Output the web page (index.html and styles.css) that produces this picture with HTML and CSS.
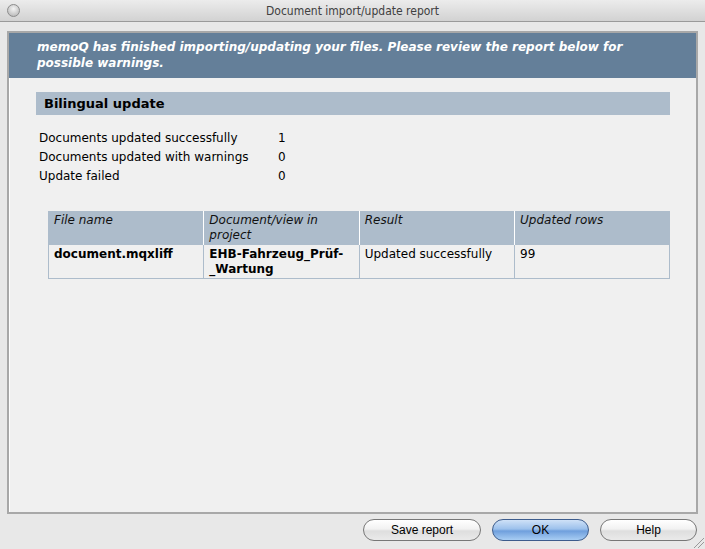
FILE: index.html
```html
<!DOCTYPE html>
<html>
<head>
<meta charset="utf-8">
<link rel="stylesheet" href="styles.css">
</head>
<body>
<div class="window">
  <div class="titlebar">
    <span class="close"></span>
    <span class="title">Document import/update report</span>
  </div>
  <div class="panel">
    <div class="banner">memoQ has finished importing/updating your files. Please review the report below for possible warnings.</div>
    <div class="section">
      <div class="section-head">Bilingual update</div>
      <div class="stats">
        <div class="stat"><span class="label">Documents updated successfully</span><span class="val">1</span></div>
        <div class="stat"><span class="label">Documents updated with warnings</span><span class="val">0</span></div>
        <div class="stat"><span class="label">Update failed</span><span class="val">0</span></div>
      </div>
      <table class="report">
        <thead>
          <tr><th>File name</th><th>Document/view in project</th><th>Result</th><th>Updated rows</th></tr>
        </thead>
        <tbody>
          <tr><td class="b">document.mqxliff</td><td class="b">EHB-Fahrzeug_Prüf-<br>_Wartung</td><td>Updated successfully</td><td>99</td></tr>
        </tbody>
      </table>
    </div>
  </div>
  <div class="buttons">
    <button class="btn">Save report</button>
    <button class="btn ok">OK</button>
    <button class="btn">Help</button>
  </div>
  <div class="grip"></div>
</div>
</body>
</html>
```
FILE: styles.css
```css
html, body { margin: 0; padding: 0; }
body { width: 705px; height: 549px; overflow: hidden; background: #e8e8e8; font-family: "DejaVu Sans", Verdana, sans-serif; }
.window { position: relative; width: 705px; height: 549px; display: flex; flex-direction: column; }
.titlebar { height: 22px; background: linear-gradient(#ececec, #d2d2d2); border-bottom: 1px solid #9a9a9a; display: flex; align-items: center; justify-content: center; position: relative; box-sizing: border-box; }
.close { position: absolute; left: 7px; top: 4px; width: 13px; height: 13px; border-radius: 50%; background: radial-gradient(circle at 50% 35%, #f4f4f4, #c4c4c4 70%, #a8a8a8); border: 1px solid #8c8c8c; box-sizing: border-box; }
.title { font-family: "Liberation Sans Narrow", "DejaVu Sans Condensed", "Liberation Sans", sans-serif; font-size: 12px; color: #404040; }
.panel { margin: 9px 7px 0 7px; height: 483px; border: 2px solid #a8a8a8; background: #f0f0f0; box-sizing: border-box; padding: 0; box-shadow: inset 1px 1px 0 #ffffff; }
.banner { background: #647f99; color: #fff; font-weight: bold; font-style: italic; font-size: 12px; line-height: 16px; padding: 6px 28px 7px 28px; }
.section { padding: 14px 26px 0 27px; }
.section-head { background: #adbccb; height: 23px; line-height: 23px; padding-left: 8px; font-weight: bold; font-size: 13px; color: #000; }
.stats { margin-top: 14px; font-size: 12px; color: #000; }
.stat { display: flex; height: 19px; line-height: 19px; padding-left: 3px; }
.label { width: 239px; }
.report { margin: 25px 0 0 12px; width: 622px; border-collapse: collapse; font-size: 12px; table-layout: fixed; }
.report th { background: #adbccb; font-weight: normal; font-style: italic; text-align: left; vertical-align: top; padding: 2px 5px 1px 5px; line-height: 15px; height: 30px; border-left: 1px solid #ffffff; color: #111; }
.report th:first-child { border-left: 1px solid #adbccb; }
.report td { vertical-align: top; padding: 2px 5px 1px 5px; line-height: 15px; height: 30px; border: 1px solid #adbccb; color: #000; }
.report td.b { font-weight: bold; }
.report th, .report td { width: 25%; }
.buttons { display: flex; justify-content: flex-end; gap: 11px; padding: 5px 8px 0 0; }
.btn { height: 22px; border-radius: 11px; border: 1px solid #777; background: linear-gradient(#ffffff, #f2f2f2 45%, #dedede 55%, #eaeaea); font-family: "Liberation Sans", Arial, sans-serif; font-size: 12px; color: #000; padding: 0; width: 118px; box-sizing: border-box; }
.btn.ok { width: 97px; border-color: #3d5c8c; background: linear-gradient(#cfe1f7, #9cc1ec 45%, #6f9fdd 55%, #a8cdf3); }
.btn:last-child { width: 97px; }
.grip { position: absolute; right: 1px; bottom: 1px; width: 10px; height: 10px; background: linear-gradient(135deg, transparent 45%, #999 46%, #999 52%, transparent 53%, transparent 65%, #999 66%, #999 72%, transparent 73%); }
```
